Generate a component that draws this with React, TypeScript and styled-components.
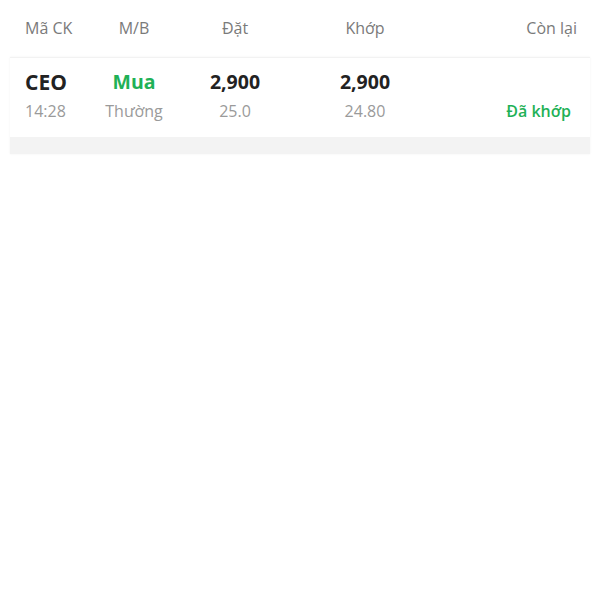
import React from "react";
import styled, { createGlobalStyle } from "styled-components";

const GlobalStyle = createGlobalStyle`
  body {
    margin: 0;
    background: #ffffff;
    font-family: "Open Sans", "Noto Sans", sans-serif;
  }
`;

const Page = styled.div`
  width: 600px;
  height: 600px;
  background: #ffffff;
`;

const COLS = "70px 78px 124px 136px 1fr";

const HeaderRow = styled.div`
  display: grid;
  grid-template-columns: ${COLS};
  padding: 16px 23px 0 25px;
  height: 41px;
  box-sizing: border-box;
`;

const HeaderCell = styled.div<{ $align: string }>`
  font-size: 16px;
  color: #7a7a7a;
  text-align: ${(p) => p.$align};
  line-height: 24px;
`;

const Card = styled.div`
  margin: 16px 10px 0 10px;
  background: #ffffff;
  border-top: 1px solid #f2f2f2;
  box-shadow: 0 0 2px rgba(0, 0, 0, 0.06);
`;

const OrderRow = styled.div`
  display: grid;
  grid-template-columns: ${COLS};
  padding: 10px 19px 14px 15px;
`;

const Cell = styled.div<{ $align: string }>`
  display: flex;
  flex-direction: column;
  align-items: ${(p) => p.$align};
  gap: 3px;
  white-space: nowrap;
`;

const Main = styled.div<{ $green?: boolean; $big?: boolean }>`
  font-size: ${(p) => (p.$big ? "21px" : "19.5px")};
  font-weight: 700;
  color: ${(p) => (p.$green ? "#1fb157" : "#222222")};
  line-height: 28px;
  height: 28px;
`;

const Sub = styled.div<{ $green?: boolean }>`
  font-size: 16px;
  color: ${(p) => (p.$green ? "#1fb157" : "#9a9a9a")};
  font-weight: ${(p) => (p.$green ? 600 : 400)};
  line-height: 24px;
`;

const Footer = styled.div`
  height: 17px;
  background: #f3f3f3;
`;

const columns = [
  { label: "Mã CK", align: "left" },
  { label: "M/B", align: "center" },
  { label: "Đặt", align: "center" },
  { label: "Khớp", align: "center" },
  { label: "Còn lại", align: "right" },
];

const flexAlign = (a: string) =>
  a === "left" ? "flex-start" : a === "right" ? "flex-end" : "center";

export default function App() {
  return (
    <Page>
      <GlobalStyle />
      <HeaderRow>
        {columns.map((c) => (
          <HeaderCell key={c.label} $align={c.align}>
            {c.label}
          </HeaderCell>
        ))}
      </HeaderRow>
      <Card>
        <OrderRow>
          <Cell $align={flexAlign("left")}>
            <Main $big>CEO</Main>
            <Sub>14:28</Sub>
          </Cell>
          <Cell $align={flexAlign("center")}>
            <Main $green>Mua</Main>
            <Sub>Thường</Sub>
          </Cell>
          <Cell $align={flexAlign("center")}>
            <Main>2,900</Main>
            <Sub>25.0</Sub>
          </Cell>
          <Cell $align={flexAlign("center")}>
            <Main>2,900</Main>
            <Sub>24.80</Sub>
          </Cell>
          <Cell $align={flexAlign("right")}>
            <Main />
            <Sub $green>Đã khớp</Sub>
          </Cell>
        </OrderRow>
        <Footer />
      </Card>
    </Page>
  );
}
